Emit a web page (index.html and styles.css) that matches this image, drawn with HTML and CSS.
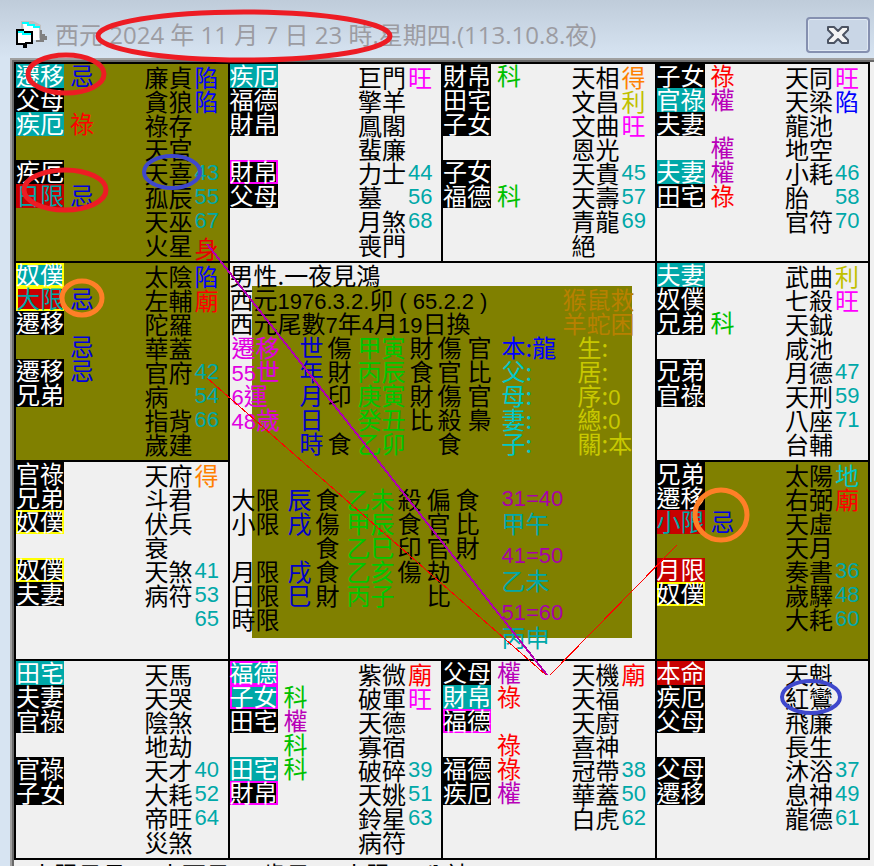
FILE: index.html
```
<!DOCTYPE html>
<html lang="zh-Hant">
<head>
    <meta charset="utf-8">
    <title>紫微斗數流時盤</title>
    <link rel="stylesheet" href="styles.css">
</head>
<body>
<div class="window">
    <header class="titlebar">
        <svg class="app-icon" width="32" height="28" viewBox="0 0 32 28">
            <path d="M5 0h12l8 4v13H13L5 12z" fill="#c0c0c0"/>
            <path d="M7 3h9l7 4v12H9z" fill="#fff"/>
            <path d="M6 2h6v2h6v2h6" fill="none" stroke="#00ffff" stroke-width="2"/>
            <path d="M24 9h2v4h3v2h2v4h-3v2h-8v-2h4z" fill="#808080"/>
            <path d="M1 9h6v2h9v11h-6v4H8v-3H1z" fill="#fff" stroke="#000" stroke-width="2"/>
            <path d="M2 11h5v2h8" fill="none" stroke="#00ffff" stroke-width="2"/>
        </svg>
        <h1>西元 2024 年 11 月 7 日 23 時.星期四.(113.10.8.夜)</h1>
        <button type="button" class="close" aria-label="關閉">
            <svg width="24" height="20" viewBox="0 0 24 20">
                <path d="M2 2h6l4 4 4-4h6v3l-5 5 5 5v3h-6l-4-4-4 4H2v-3l5-5-5-5z" fill="#f4f4f4" stroke="#4b5362" stroke-width="2" stroke-linejoin="round"/>
            </svg>
        </button>
    </header>

    <main class="client">
        <div class="chart">
            <!-- 巳午未申 -->
            <section class="palace lit">
                <div class="tags">
                    <p><b class="teal">遷移</b><i class="ji">忌</i></p>
                    <p><b>父母</b></p>
                    <p><b class="teal">疾厄</b><i class="lu">祿</i></p>
                    <p></p>
                    <p><b>疾厄</b></p>
                    <p><b class="limit">日限</b><i class="ji">忌</i></p>
                </div>
                <div class="stars">廉貞<br>貪狼<br>祿存<br>天官<br>天喜<br>孤辰<br>天巫<br>火星</div>
                <div class="states">
                    <p class="xian">陷</p><p class="xian">陷</p><p></p><p></p>
                    <p class="num">43</p><p class="num">55</p><p class="num">67</p>
                    <p class="body-mark">身</p>
                </div>
            </section>
            <section class="palace">
                <div class="tags">
                    <p><b class="teal">疾厄</b></p>
                    <p><b>福德</b></p>
                    <p><b>財帛</b></p>
                    <p></p>
                    <p><b class="pink-box">財帛</b></p>
                    <p><b>父母</b></p>
                </div>
                <div class="stars">巨門<br>擎羊<br>鳳閣<br>蜚廉<br>力士<br>墓<br>月煞<br>喪門</div>
                <div class="states">
                    <p class="wang">旺</p><p></p><p></p><p></p>
                    <p class="num">44</p><p class="num">56</p><p class="num">68</p>
                </div>
            </section>
            <section class="palace">
                <div class="tags">
                    <p><b>財帛</b><i class="ke">科</i></p>
                    <p><b>田宅</b></p>
                    <p><b>子女</b></p>
                    <p></p>
                    <p><b>子女</b></p>
                    <p><b>福德</b><i class="ke">科</i></p>
                </div>
                <div class="stars">天相<br>文昌<br>文曲<br>恩光<br>天貴<br>天壽<br>青龍<br>絕</div>
                <div class="states">
                    <p class="de">得</p><p class="li">利</p><p class="wang">旺</p><p></p>
                    <p class="num">45</p><p class="num">57</p><p class="num">69</p>
                </div>
            </section>
            <section class="palace">
                <div class="tags">
                    <p><b>子女</b><i class="lu">祿</i></p>
                    <p><b class="teal">官祿</b><i class="quan">權</i></p>
                    <p><b>夫妻</b></p>
                    <p><i class="quan">權</i></p>
                    <p><b class="teal">夫妻</b><i class="quan">權</i></p>
                    <p><b>田宅</b><i class="lu">祿</i></p>
                </div>
                <div class="stars">天同<br>天梁<br>龍池<br>地空<br>小耗<br>胎<br>官符</div>
                <div class="states">
                    <p class="wang">旺</p><p class="xian">陷</p><p></p><p></p>
                    <p class="num">46</p><p class="num">58</p><p class="num">70</p>
                </div>
            </section>

            <!-- 辰 / 中宮 / 酉 -->
            <section class="palace lit">
                <div class="tags">
                    <p><b class="teal yellow-box">奴僕</b></p>
                    <p><b class="limit yellow-box">大限</b><i class="ji">忌</i></p>
                    <p><b>遷移</b></p>
                    <p><i class="ji">忌</i></p>
                    <p><b>遷移</b><i class="ji">忌</i></p>
                    <p><b>兄弟</b></p>
                </div>
                <div class="stars">太陰<br>左輔<br>陀羅<br>華蓋<br>官府<br>病<br>指背<br>歲建</div>
                <div class="states">
                    <p class="xian">陷</p><p class="miao">廟</p><p></p><p></p>
                    <p class="num">42</p><p class="num">54</p><p class="num">66</p>
                </div>
            </section>

            <section class="center">
                <p class="line">男性.一夜見鴻</p>
                <p class="line"><span>西元<span class="d">1976.3.2.</span>卯<span class="d"> ( 65.2.2 )</span></span><span class="zodiac">猴鼠救</span></p>
                <p class="line"><span>西元尾數<span class="d">7</span>年<span class="d">4</span>月<span class="d">19</span>日換</span><span class="zodiac">羊蛇困</span></p>
                <div class="pillars">
                    <span class="age">遷移</span><span class="navy">世</span><span>傷</span><span class="green">甲寅</span><span>財</span><span>傷</span><span>官</span><span class="blue">本:龍</span><span class="gold">生:</span>
                    <span class="age"><span class="d">55</span>世</span><span class="navy">年</span><span>財</span><span class="green">丙辰</span><span>食</span><span>官</span><span>比</span><span class="cyan">父:</span><span class="gold">居:</span>
                    <span class="age"><span class="d">6</span>運</span><span class="navy">月</span><span>印</span><span class="green">庚寅</span><span>財</span><span>傷</span><span>官</span><span class="cyan">母:</span><span class="gold">序:<span class="d">0</span></span>
                    <span class="age"><span class="d">48</span>歲</span><span class="navy">日</span><span></span><span class="green">癸丑</span><span>比</span><span>殺</span><span>梟</span><span class="cyan">妻:</span><span class="gold">總:<span class="d">0</span></span>
                    <span></span><span class="navy">時</span><span>食</span><span class="green">乙卯</span><span></span><span>食</span><span></span><span class="cyan">子:</span><span class="gold">關:本</span>
                </div>
                <div class="limits">
                    <div class="limit-rows">
                        <span>大限</span><span class="navy">辰</span><span>食</span><span class="green">乙未</span><span>殺</span><span>偏</span><span>食</span>
                        <span>小限</span><span class="navy">戌</span><span>傷</span><span class="green">甲辰</span><span>食</span><span>官</span><span>比</span>
                        <span></span><span></span><span>食</span><span class="green">乙巳</span><span>印</span><span>官</span><span>財</span>
                        <span>月限</span><span class="navy">戌</span><span>食</span><span class="green">乙亥</span><span>傷</span><span>劫</span><span></span>
                        <span>日限</span><span class="navy">巳</span><span>財</span><span class="green">丙子</span><span></span><span>比</span><span></span>
                        <span>時限</span>
                    </div>
                    <dl class="decades">
                        <div><dt>31=40</dt><dd>甲午</dd></div>
                        <div><dt>41=50</dt><dd>乙未</dd></div>
                        <div><dt>51=60</dt><dd>丙申</dd></div>
                    </dl>
                </div>
            </section>

            <section class="palace">
                <div class="tags">
                    <p><b class="teal">夫妻</b></p>
                    <p><b>奴僕</b></p>
                    <p><b>兄弟</b><i class="ke">科</i></p>
                    <p></p>
                    <p><b>兄弟</b></p>
                    <p><b>官祿</b></p>
                </div>
                <div class="stars">武曲<br>七殺<br>天鉞<br>咸池<br>月德<br>天刑<br>八座<br>台輔</div>
                <div class="states">
                    <p class="li">利</p><p class="wang">旺</p><p></p><p></p>
                    <p class="num">47</p><p class="num">59</p><p class="num">71</p>
                </div>
            </section>

            <!-- 卯 / 戌 -->
            <section class="palace">
                <div class="tags">
                    <p><b>官祿</b></p>
                    <p><b>兄弟</b></p>
                    <p><b class="yellow-box">奴僕</b></p>
                    <p></p>
                    <p><b class="yellow-box">奴僕</b></p>
                    <p><b>夫妻</b></p>
                </div>
                <div class="stars">天府<br>斗君<br>伏兵<br>衰<br>天煞<br>病符</div>
                <div class="states">
                    <p class="de">得</p><p></p><p></p><p></p>
                    <p class="num">41</p><p class="num">53</p><p class="num">65</p>
                </div>
            </section>
            <section class="palace lit">
                <div class="tags">
                    <p><b>兄弟</b></p>
                    <p><b>遷移</b></p>
                    <p><b class="limit">小限</b><i class="ji">忌</i></p>
                    <p></p>
                    <p><b class="red">月限</b></p>
                    <p><b class="yellow-box">奴僕</b></p>
                </div>
                <div class="stars">太陽<br>右弼<br>天虛<br>天月<br>奏書<br>歲驛<br>大耗</div>
                <div class="states">
                    <p class="cyan">地</p><p class="miao">廟</p><p></p><p></p>
                    <p class="num">36</p><p class="num">48</p><p class="num">60</p>
                </div>
            </section>

            <!-- 寅丑子亥 -->
            <section class="palace">
                <div class="tags">
                    <p><b class="teal">田宅</b></p>
                    <p><b>夫妻</b></p>
                    <p><b>官祿</b></p>
                    <p></p>
                    <p><b>官祿</b></p>
                    <p><b>子女</b></p>
                </div>
                <div class="stars">天馬<br>天哭<br>陰煞<br>地劫<br>天才<br>大耗<br>帝旺<br>災煞</div>
                <div class="states">
                    <p></p><p></p><p></p><p></p>
                    <p class="num">40</p><p class="num">52</p><p class="num">64</p>
                </div>
            </section>
            <section class="palace">
                <div class="tags">
                    <p><b class="teal pink-box">福德</b></p>
                    <p><b class="teal pink-box">子女</b><i class="ke">科</i></p>
                    <p><b>田宅</b><i class="quan">權</i></p>
                    <p><i class="ke">科</i></p>
                    <p><b class="teal">田宅</b><i class="ke">科</i></p>
                    <p><b class="pink-box">財帛</b></p>
                </div>
                <div class="stars">紫微<br>破軍<br>天德<br>寡宿<br>破碎<br>天姚<br>鈴星<br>病符</div>
                <div class="states">
                    <p class="miao">廟</p><p class="wang">旺</p><p></p><p></p>
                    <p class="num">39</p><p class="num">51</p><p class="num">63</p>
                </div>
            </section>
            <section class="palace">
                <div class="tags">
                    <p><b>父母</b><i class="quan">權</i></p>
                    <p><b class="teal">財帛</b><i class="lu">祿</i></p>
                    <p><b class="pink-box">福德</b></p>
                    <p><i class="lu">祿</i></p>
                    <p><b>福德</b><i class="lu">祿</i></p>
                    <p><b>疾厄</b><i class="quan">權</i></p>
                </div>
                <div class="stars">天機<br>天福<br>天廚<br>喜神<br>冠帶<br>華蓋<br>白虎</div>
                <div class="states">
                    <p class="miao">廟</p><p></p><p></p><p></p>
                    <p class="num">38</p><p class="num">50</p><p class="num">62</p>
                </div>
            </section>
            <section class="palace">
                <div class="tags">
                    <p><b class="red">本命</b></p>
                    <p><b>疾厄</b></p>
                    <p><b>父母</b></p>
                    <p></p>
                    <p><b>父母</b></p>
                    <p><b>遷移</b></p>
                </div>
                <div class="stars">天魁<br>紅鸞<br>飛廉<br>長生<br>沐浴<br>息神<br>龍德</div>
                <div class="states">
                    <p></p><p></p><p></p><p></p>
                    <p class="num">37</p><p class="num">49</p><p class="num">61</p>
                </div>
            </section>
        </div>
        <p class="footer"><span>小限日月</span><span>小西日</span><span>歲日</span><span>小限</span><span>八神</span></p>
    </main>

    <!-- 飛星線與圈註 -->
    <svg class="overlay" width="874" height="866" viewBox="0 0 874 866" fill="none">
        <g stroke-width="1" shape-rendering="crispEdges">
            <path d="M207 244L547 675" stroke="#b000b0" stroke-width="2"/>
            <path d="M207 378L546 675M550 675L677 545" stroke="#ff0000"/>
        </g>
        <g stroke="#ed1c24" stroke-width="5">
            <ellipse cx="244" cy="36" rx="146" ry="24"/>
            <ellipse cx="66" cy="74" rx="38" ry="19"/>
            <ellipse cx="65" cy="190" rx="41" ry="20"/>
        </g>
        <g stroke="#3f48cc" stroke-width="4">
            <ellipse cx="172" cy="172" rx="28" ry="16"/>
            <ellipse cx="811" cy="697" rx="29" ry="16"/>
        </g>
        <g stroke="#ff7f27" stroke-width="5">
            <ellipse cx="82" cy="298" rx="20" ry="17"/>
            <ellipse cx="721" cy="515" rx="26" ry="25"/>
        </g>
    </svg>
</div>
</body>
</html>
```

FILE: styles.css
```
* {
    box-sizing: border-box;
}

body {
    margin: 0;
    background: #d7e4f2;
    color: #000;
    font-family: "Noto Sans CJK TC", sans-serif;
    font-size: 24px;
    line-height: 24px;
}

p, h1, dl, dd {
    margin: 0;
}

.window {
    position: relative;
    display: flex;
    flex-direction: column;
    height: 100vh;
    padding-left: 10px;
    overflow: hidden;
}

/* title bar */
.titlebar {
    display: flex;
    flex: none;
    align-items: center;
    height: 58px;
    margin-left: -10px;
    padding: 12px 4px 0 16px;
    background: linear-gradient(#bfccda, #d7e4f2);
}

.titlebar h1 {
    margin-left: 7px;
    color: #9c9ca2;
    font-family: "Open Sans", "Noto Sans CJK TC", sans-serif;
    font-size: 24px;
    font-weight: normal;
    white-space: nowrap;
}

.app-icon {
    flex: none;
}

.close {
    display: flex;
    align-items: center;
    justify-content: center;
    width: 64px;
    height: 36px;
    margin-left: auto;
    padding: 0;
    border: 2px solid #8590b0;
    border-radius: 4px;
    background: #c9d6e6;
    box-shadow: inset 0 0 0 1px #dfe8f3;
}

.client {
    flex: 1;
    min-height: 0;
    padding: 2px 4px 0 2px;
    border-top: 2px solid #a0a0a0;
    border-left: 2px solid #a0a0a0;
    background: #f0f0f0;
    box-shadow: inset 2px 2px #696969;
    overflow: hidden;
}

/* 4 x 4 board, the gaps are the black rules */
.chart {
    display: grid;
    grid-template-columns: repeat(4, minmax(0, 1fr));
    grid-auto-rows: 1fr;
    gap: 2px;
    padding: 2px;
    background: #000;
}

.palace {
    display: flex;
    padding: 0 9px 4px 0;
    background: #f0f0f0;
}

.lit {
    background: #808000;
}

.tags {
    line-height: 22px;
}

.tags p {
    display: flex;
    gap: 6px;
    height: 24px;
}

.tags b {
    width: 48px;
    background: #000;
    color: #fff;
    font-weight: normal;
}

.tags i {
    font-style: normal;
}

.tags i:first-child {
    margin-left: 54px;
}

.tags .teal {
    background: #00a8a8;
}

.tags .red {
    background: #c80000;
}

.tags .limit {
    background: #c80000;
    color: #00a8a8;
}

.tags .yellow-box {
    box-shadow: inset 0 0 0 2px #ffff00;
}

.tags .pink-box {
    box-shadow: inset 0 0 0 2px #ff00ff;
}

.stars {
    width: 48px;
    margin-left: auto;
    padding-top: 1px;
}

.states {
    width: 24px;
    margin-left: 2px;
    padding-top: 1px;
}

.states p {
    height: 24px;
}

.d, .num, .decades dt {
    font-family: "Liberation Sans", sans-serif;
    font-size: 22px;
}

.num {
    color: #00a8a8;
}

.ji { color: #0000e0; }
.lu { color: #ff0000; }
.quan { color: #b800b8; }
.ke { color: #00c000; }

.xian, .blue { color: #0000ff; }
.wang { color: #ff00ff; }
.miao { color: #ff0000; }
.de { color: #ff8000; }
.li { color: #c0c000; }
.cyan { color: #00c8c8; }
.gold { color: #c8c800; }
.navy { color: #0000c8; }
.green { color: #00c800; }
.age { color: #e000e0; }
.zodiac { color: #b88000; }

.states .body-mark {
    padding-top: 3px;
    color: #e80000;
}

/* middle block */
.center {
    grid-column: 2 / 4;
    grid-row: 2 / 4;
    background: linear-gradient(#808000, #808000) 22px 23px / 380px 352px no-repeat #f0f0f0;
}

.line {
    display: flex;
    justify-content: space-between;
    height: 24px;
    padding-right: 20px;
    white-space: pre;
}

.pillars {
    display: grid;
    grid-template-columns: 68px 28px 30px 52px 28px 30px 34px 76px 1fr;
    grid-auto-rows: 24px;
    padding-left: 2px;
}

.limits {
    display: flex;
    align-items: flex-start;
    padding-top: 32px;
}

.limit-rows {
    display: grid;
    grid-template-columns: 56px 28px 31px 51px 29px 29px 46px;
    grid-auto-rows: 24px;
    padding-left: 2px;
}

.decades {
    display: grid;
    gap: 9px;
}

.decades dt {
    color: #a800a8;
}

.decades dd {
    color: #00a8a8;
}

.footer {
    display: flex;
    gap: 32px;
    padding: 2px 16px;
}

/* lines and rings drawn over the board */
.overlay {
    position: absolute;
    top: 0;
    left: 0;
    pointer-events: none;
}
```
